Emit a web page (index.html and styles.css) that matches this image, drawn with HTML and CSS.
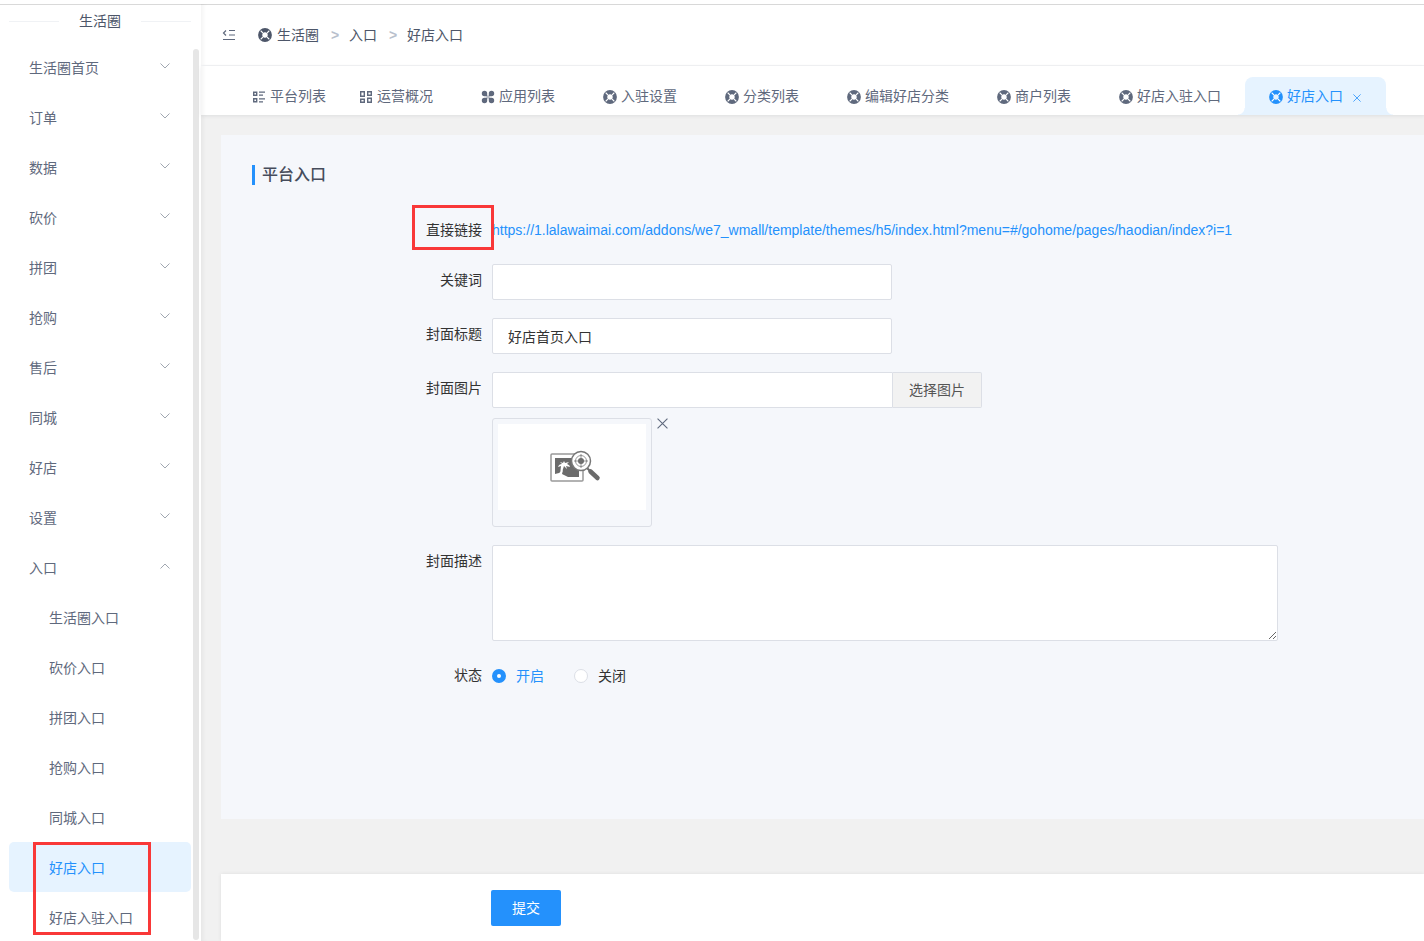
FILE: index.html
```html
<!DOCTYPE html>
<html lang="zh-CN">
<head>
  <meta charset="UTF-8">
  <title>好店入口</title>
  <link rel="stylesheet" href="styles.css">
</head>
<body>
  <!-- shared icons -->
  <svg class="sprite" aria-hidden="true">
    <symbol id="i-down" viewBox="0 0 10 6"><path d="M.5 .5 5 5 9.500 .5" fill="none" stroke="currentColor"/></symbol>
    <symbol id="i-up" viewBox="0 0 10 6"><path d="M.5 5.500 5 1 9.500 5.500" fill="none" stroke="currentColor"/></symbol>
    <symbol id="i-close" viewBox="0 0 10 10"><path d="M.5 .5 9.500 9.500M9.500 .5 .5 9.500" fill="none" stroke="currentColor"/></symbol>
    <symbol id="i-ring" viewBox="0 0 14 14">
      <circle cx="7" cy="7" r="4.800" fill="none" stroke="currentColor" stroke-width="4.200"/>
      <path d="M3 3 4.600 4.600M11 3 9.400 4.600M3 11 4.600 9.400M11 11 9.400 9.400" stroke="#fff" stroke-width="1.100" stroke-linecap="round"/>
    </symbol>
    <symbol id="i-list" viewBox="0 0 14 14">
      <path d="M1.700 2.200h3v3h-3zM1.700 8.800h3v3h-3z" fill="none" stroke="currentColor" stroke-width="1.400"/>
      <path d="M7 2.200h6M7 5.200h4M7 8.800h6M7 11.800h4" stroke="currentColor" stroke-width="1.200"/>
    </symbol>
    <symbol id="i-grid" viewBox="0 0 14 14">
      <path d="M1.700 1.700h3.600v4.600h-3.600zM8.700 1.700h3.600v3.600h-3.600zM1.700 9.200h3.600v3.100h-3.600zM8.700 8.200h3.600v4.100h-3.600z" fill="none" stroke="currentColor" stroke-width="1.400"/>
    </symbol>
    <symbol id="i-apps" viewBox="0 0 14 14">
      <path d="M3.500 .8a2.700 2.700 0 0 1 2.700 2.700v2.700h-2.700a2.700 2.700 0 0 1 0-5.400zM10.500 .8a2.700 2.700 0 0 1 0 5.400h-2.700v-2.700a2.700 2.700 0 0 1 2.700-2.700zM3.500 7.800h2.700v2.700a2.700 2.700 0 1 1-2.700-2.700zM7.800 7.800h2.700a2.700 2.700 0 1 1-2.700 2.700z" fill="currentColor"/>
      <path d="M5.500 7h3M7 5.500v3" stroke="currentColor" stroke-width="2" opacity=".4"/>
    </symbol>
  </svg>

  <div class="app">
    <aside class="sidebar">
      <div class="sidebar-title"><span>生活圈</span></div>
      <nav class="menu">
        <a class="menu-item" href="#">生活圈首页<svg class="arrow"><use href="#i-down"/></svg></a>
        <a class="menu-item" href="#">订单<svg class="arrow"><use href="#i-down"/></svg></a>
        <a class="menu-item" href="#">数据<svg class="arrow"><use href="#i-down"/></svg></a>
        <a class="menu-item" href="#">砍价<svg class="arrow"><use href="#i-down"/></svg></a>
        <a class="menu-item" href="#">拼团<svg class="arrow"><use href="#i-down"/></svg></a>
        <a class="menu-item" href="#">抢购<svg class="arrow"><use href="#i-down"/></svg></a>
        <a class="menu-item" href="#">售后<svg class="arrow"><use href="#i-down"/></svg></a>
        <a class="menu-item" href="#">同城<svg class="arrow"><use href="#i-down"/></svg></a>
        <a class="menu-item" href="#">好店<svg class="arrow"><use href="#i-down"/></svg></a>
        <a class="menu-item" href="#">设置<svg class="arrow"><use href="#i-down"/></svg></a>
        <a class="menu-item" href="#">入口<svg class="arrow"><use href="#i-up"/></svg></a>
        <a class="menu-item sub" href="#">生活圈入口</a>
        <a class="menu-item sub" href="#">砍价入口</a>
        <a class="menu-item sub" href="#">拼团入口</a>
        <a class="menu-item sub" href="#">抢购入口</a>
        <a class="menu-item sub" href="#">同城入口</a>
        <div class="menu-marked">
          <a class="menu-item sub active" href="#">好店入口</a>
          <a class="menu-item sub" href="#">好店入驻入口</a>
          <div class="mark mark-menu"></div>
        </div>
      </nav>
      <div class="scrollbar"></div>
    </aside>

    <div class="main">
      <header class="topbar">
        <button class="fold" type="button" aria-label="收起菜单">
          <svg viewBox="0 0 14 12"><path d="M4 1.500 1.500 4 4 6.500M7 1.500h6M7 6h6M1 10.500h12" fill="none" stroke="currentColor" stroke-width="1.200"/></svg>
        </button>
        <nav class="breadcrumb">
          <svg class="icon"><use href="#i-ring"/></svg>
          <a href="#">生活圈</a>
          <span class="sep">&gt;</span>
          <a href="#">入口</a>
          <span class="sep">&gt;</span>
          <a href="#">好店入口</a>
        </nav>
      </header>

      <nav class="tabs">
        <a class="tab home" href="#"><svg class="icon"><use href="#i-list"/></svg>平台列表</a>
        <a class="tab" href="#"><svg class="icon"><use href="#i-grid"/></svg>运营概况</a>
        <a class="tab" href="#"><svg class="icon"><use href="#i-apps"/></svg>应用列表</a>
        <a class="tab" href="#"><svg class="icon"><use href="#i-ring"/></svg>入驻设置</a>
        <a class="tab" href="#"><svg class="icon"><use href="#i-ring"/></svg>分类列表</a>
        <a class="tab" href="#"><svg class="icon"><use href="#i-ring"/></svg>编辑好店分类</a>
        <a class="tab" href="#"><svg class="icon"><use href="#i-ring"/></svg>商户列表</a>
        <a class="tab" href="#"><svg class="icon"><use href="#i-ring"/></svg>好店入驻入口</a>
        <a class="tab active" href="#"><svg class="icon"><use href="#i-ring"/></svg>好店入口<svg class="tab-close"><use href="#i-close"/></svg></a>
      </nav>

      <form class="content">
        <section class="panel">
          <h2>平台入口</h2>
          <div class="row">
            <span class="label marked">直接链接<span class="mark mark-label"></span></span>
            <a class="link" href="#">https://1.lalawaimai.com/addons/we7_wmall/template/themes/h5/index.html?menu=#/gohome/pages/haodian/index?i=1</a>
          </div>
          <div class="row">
            <label class="label" for="keyword">关键词</label>
            <input class="input" id="keyword" type="text">
          </div>
          <div class="row">
            <label class="label" for="title">封面标题</label>
            <input class="input" id="title" type="text" value="好店首页入口">
          </div>
          <div class="row">
            <label class="label" for="cover">封面图片</label>
            <div class="upload">
              <div class="input-group">
                <input class="input" id="cover" type="text">
                <button class="choose" type="button">选择图片</button>
              </div>
              <div class="preview">
                <div class="thumb">
                  <svg viewBox="0 0 148 86">
                    <rect width="148" height="86" fill="#fff"/>
                    <rect x="53" y="30" width="32" height="27" rx="1" fill="#fff" stroke="#999" stroke-width="1.500"/>
                    <path d="M57 34h24v19H70l-6-3 1-4-4 3-4 1z" fill="#6b6b6b"/>
                    <path d="M60 43q1-3 4-3l-2-2 3 1 1-2 1 2 4-1-2 2q3 1 3 3l-4-1 1 3-3-3-2 6-2 3 1-9z" fill="#fff"/>
                    <path d="M89 44 93 48" stroke="#6b6b6b" stroke-width="2"/>
                    <path d="M92.500 47.500 99.500 54" stroke="#6b6b6b" stroke-width="4.500" stroke-linecap="round"/>
                    <circle cx="83" cy="37" r="9.500" fill="#fff" stroke="#777" stroke-width="1.500"/>
                    <circle cx="83" cy="37" r="5.500" fill="none" stroke="#999"/>
                    <circle cx="83" cy="37" r="3" fill="#6b6b6b"/>
                    <path d="M76 37h14M83 30v14" stroke="#777" stroke-width=".8"/>
                  </svg>
                </div>
                <button class="remove" type="button" aria-label="删除"><svg><use href="#i-close"/></svg></button>
              </div>
            </div>
          </div>
          <div class="row">
            <label class="label" for="desc">封面描述</label>
            <textarea class="input" id="desc"></textarea>
          </div>
          <div class="row">
            <span class="label">状态</span>
            <div class="radios">
              <label><input type="radio" name="status" checked><span>开启</span></label>
              <label><input type="radio" name="status"><span>关闭</span></label>
            </div>
          </div>
        </section>
        <div class="actions">
          <button class="submit" type="submit">提交</button>
        </div>
      </form>
    </div>
  </div>
</body>
</html>
```

FILE: styles.css
```css
:root {
  --primary: #2491fc;
  --primary-light: #e6f3ff;
  --text: #5f697d;
  --border: #dcdfe6;
  --mark: #f93838;
}

* {
  box-sizing: border-box;
}

body {
  margin: 0;
  font-family: "Liberation Sans", "Noto Sans CJK SC", sans-serif;
  font-size: 14px;
  line-height: 20px;
  color: var(--text);
}

a {
  color: inherit;
  text-decoration: none;
}

button,
input,
textarea {
  font: inherit;
}

button {
  padding: 0;
  border: none;
  background: none;
  color: inherit;
  cursor: pointer;
}

.sprite {
  position: absolute;
  width: 0;
  height: 0;
}

.icon {
  flex: none;
  width: 14px;
  height: 14px;
  margin-top: 1px;
}

.app {
  display: flex;
  height: 100vh;
  padding-top: 4px;
  overflow: hidden;
  background: linear-gradient(#fff 4px, #d9d9d9 4px, #d9d9d9 5px, #fff 5px);
}

/* red annotation frames */
.mark {
  position: absolute;
  border: 3px solid var(--mark);
  pointer-events: none;
  z-index: 2;
}

/* sidebar */
.sidebar {
  position: relative;
  flex: none;
  width: 201px;
  padding: 7px 10px 0 9px;
}

.sidebar-title {
  display: flex;
  align-items: center;
  gap: 20px;
  height: 20px;
  margin-bottom: 11px;
  color: #4d5669;
}

.sidebar-title::before,
.sidebar-title::after {
  content: "";
  flex: 1;
  height: 1px;
  background: #f0f2f5;
}

.menu-item {
  display: flex;
  align-items: center;
  justify-content: space-between;
  height: 50px;
  padding: 1px 21px 0 20px;
  border-radius: 5px;
}

.menu-item.sub {
  padding-left: 40px;
}

.menu-item.active {
  background: var(--primary-light);
  color: var(--primary);
}

.arrow {
  width: 10px;
  height: 6px;
  margin-bottom: 4px;
  color: #a0a6b0;
}

.menu-marked {
  position: relative;
}

.mark-menu {
  left: 24px;
  top: 0;
  width: 118px;
  height: 93px;
}

.scrollbar {
  position: absolute;
  right: 2px;
  top: 45px;
  bottom: 1px;
  width: 6px;
  border-radius: 3px;
  background: #e6e6e6;
}

/* header */
.main {
  flex: 1;
  min-width: 0;
  display: flex;
  flex-direction: column;
  box-shadow: inset 4px 0 4px -2px rgba(0, 0, 0, 0.05);
}

.topbar {
  display: flex;
  align-items: center;
  gap: 22px;
  height: 62px;
  padding: 0 21px;
  border-bottom: 1px solid #f2f3f5;
}

.fold svg {
  display: block;
  width: 14px;
  height: 12px;
}

.breadcrumb {
  display: flex;
  align-items: center;
  color: #4d5669;
}

.breadcrumb .icon {
  margin-right: 5px;
}

.breadcrumb .sep {
  width: 30px;
  padding-left: 2px;
  text-align: center;
  color: #b8bfcc;
  font-weight: bold;
}

.tabs {
  display: flex;
  align-items: flex-end;
  height: 49px;
  padding-left: 27px;
  white-space: nowrap;
  position: relative;
  box-shadow: 0 1px 4px rgba(0, 21, 41, 0.08);
}

.tab {
  position: relative;
  display: flex;
  align-items: center;
  gap: 4px;
  height: 38px;
  padding: 0 24px;
}

.tab.home {
  padding-right: 9px;
}

.tab.active {
  background: var(--primary-light);
  color: var(--primary);
  border-radius: 8px 8px 0 0;
}

/* curved feet of the active tab */
.tab.active::before,
.tab.active::after {
  content: "";
  position: absolute;
  bottom: 0;
  width: 7px;
  height: 7px;
}

.tab.active::before {
  left: -7px;
  background: radial-gradient(circle at 0 0, transparent 6px, var(--primary-light) 7px);
}

.tab.active::after {
  right: -7px;
  background: radial-gradient(circle at 100% 0, transparent 6px, var(--primary-light) 7px);
}

.tab-close {
  width: 8px;
  height: 8px;
  margin: 3px 1px 0 6px;
}

/* content */
.content {
  flex: 1;
  display: flex;
  flex-direction: column;
  gap: 55px;
  padding: 20px 0 0 20px;
  background: #f1f1f1;
  box-shadow: inset 4px 0 4px -2px rgba(0, 0, 0, 0.05);
}

.panel {
  flex: 1;
  padding: 30px 146px 0 31px;
  background: #f5f7fb;
}

.panel h2 {
  margin: 0 0 29px;
  padding-left: 7px;
  border-left: 3px solid var(--primary);
  font-size: 16px;
  font-weight: 500;
  line-height: 20px;
  color: #464c5b;
}

.row {
  display: flex;
  align-items: flex-start;
  gap: 10px;
  margin-bottom: 18px;
}

.label {
  flex: none;
  width: 230px;
  line-height: 32px;
  text-align: right;
  color: #333;
}

.marked {
  position: relative;
}

.mark-label {
  right: -12px;
  top: -9px;
  width: 82px;
  height: 45px;
}

.link {
  line-height: 32px;
  color: var(--primary);
  white-space: nowrap;
}

.input {
  width: 400px;
  height: 36px;
  padding: 0 15px 1px;
  border: 1px solid var(--border);
  border-radius: 2px;
  background: #fff;
  color: #333;
  outline: none;
}

textarea.input {
  flex: 1;
  height: 96px;
  padding: 5px 15px;
  resize: vertical;
}

.input-group {
  display: flex;
}

.input-group .input {
  width: 401px;
  border-radius: 2px 0 0 2px;
}

.choose {
  width: 89px;
  height: 36px;
  border: 1px solid var(--border);
  border-left: none;
  border-radius: 0 2px 2px 0;
  background: #f2f2f2;
  color: #555;
}

.preview {
  display: flex;
  align-items: flex-start;
  gap: 5px;
  margin-top: 10px;
}

.thumb {
  width: 160px;
  padding: 5px 5px 16px;
  border: 1px solid var(--border);
  border-radius: 3px;
}

.thumb svg {
  display: block;
  width: 148px;
  height: 86px;
}

.remove svg {
  display: block;
  width: 11px;
  height: 11px;
}

.radios {
  display: flex;
  gap: 30px;
  line-height: 34px;
  color: #333;
}

.radios label {
  display: flex;
  align-items: center;
  gap: 10px;
}

.radios input {
  appearance: none;
  width: 14px;
  height: 14px;
  margin: 0;
  border: 1px solid var(--border);
  border-radius: 50%;
  background: #fff;
}

.radios input:checked {
  border: 5px solid var(--primary);
}

.radios input:checked + span {
  color: var(--primary);
}

.actions {
  padding: 16px 0 15px 270px;
  background: #fff;
  box-shadow: 0 0 4px rgba(0, 0, 0, 0.08);
}

.submit {
  display: block;
  width: 70px;
  height: 36px;
  border-radius: 2px;
  background: var(--primary);
  color: #fff;
}
```
